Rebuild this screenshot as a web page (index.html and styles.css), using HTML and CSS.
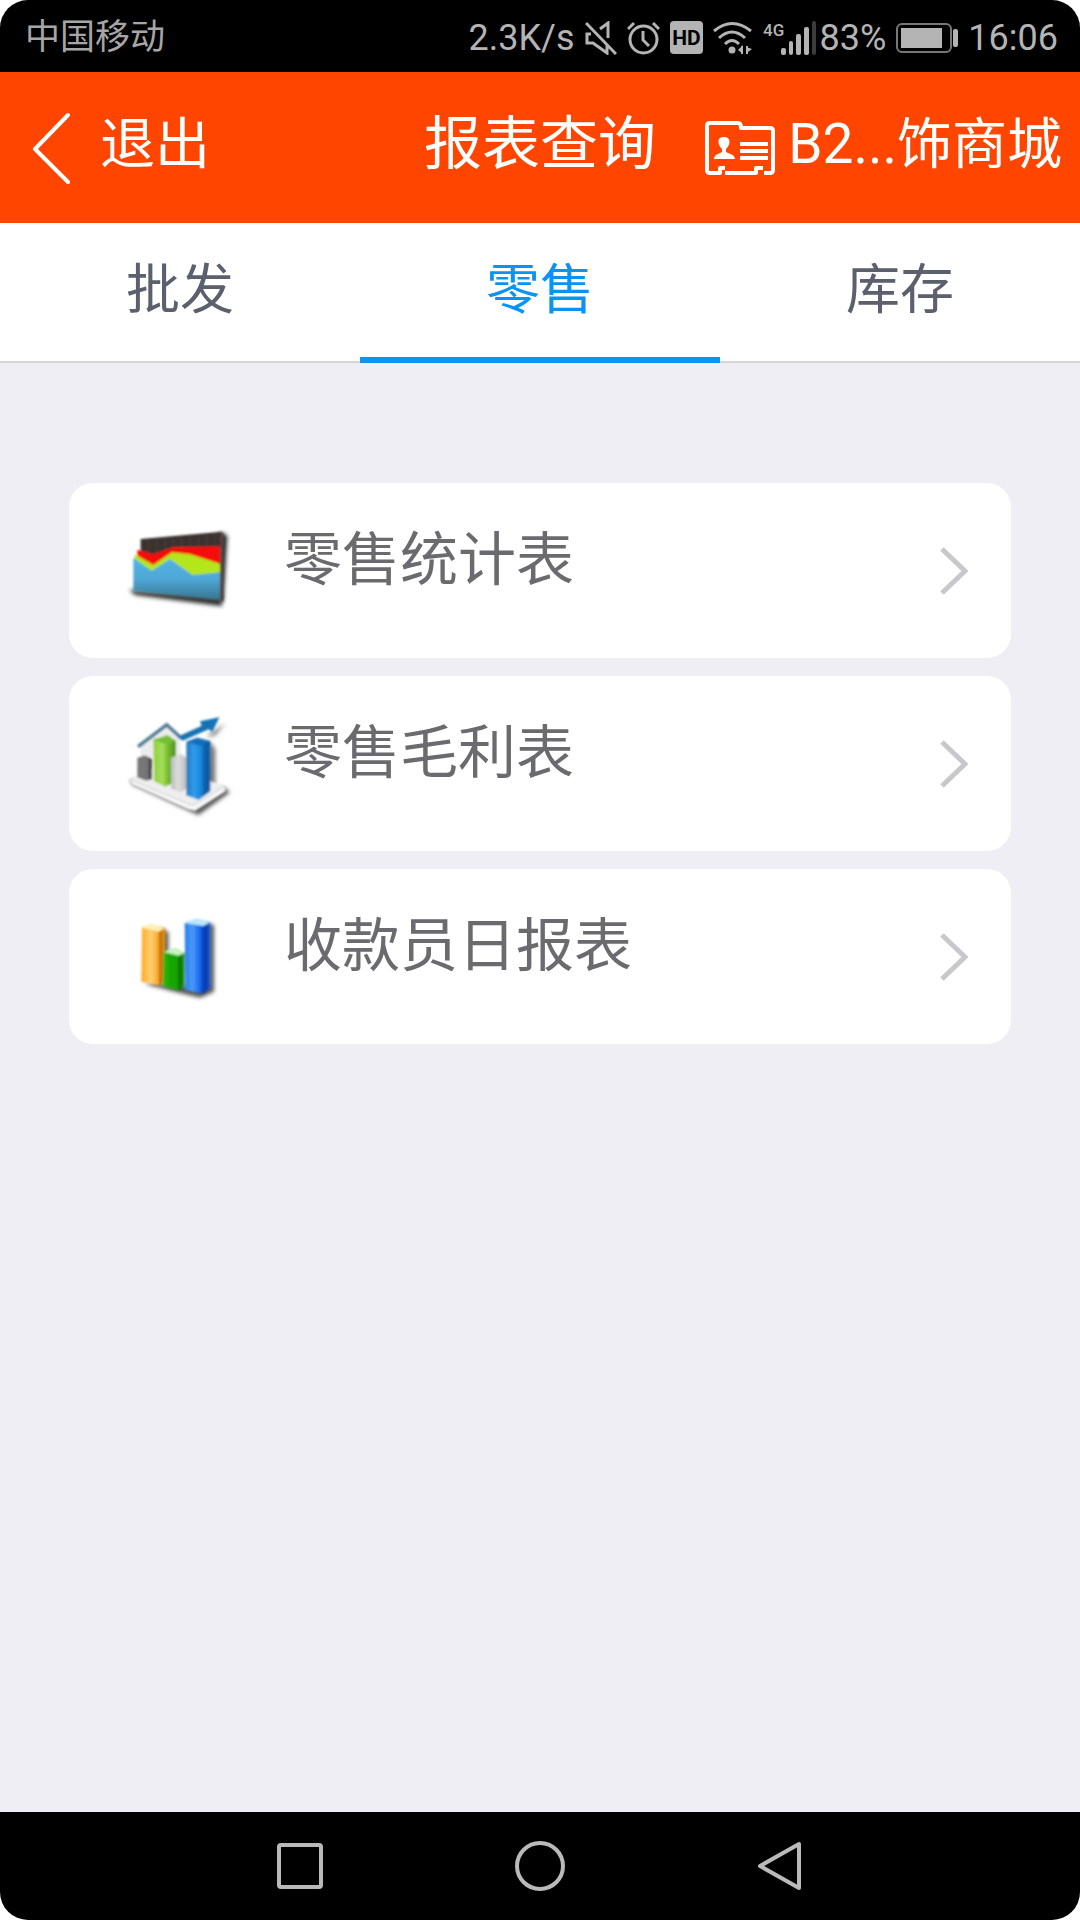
FILE: index.html
```html
<!DOCTYPE html>
<html lang="zh-CN">
<head>
<meta charset="utf-8">
<meta name="viewport" content="width=device-width, initial-scale=1">
<title>报表查询</title>
<link rel="stylesheet" href="styles.css">
</head>
<body>
<div class="screen">
  <div class="status">
    <span class="carrier">中国移动</span>
    <div class="status-info">
      <span>2.3K/s</span>
      <svg width="32" height="34" viewBox="0 0 32 34" fill="none" stroke="currentColor" stroke-width="3">
        <path d="M1 2 31 33M6 13H2v9h6l14 10v-8M15 8l8-6v15"/>
      </svg>
      <svg width="33" height="34" viewBox="0 0 33 34" fill="none" stroke="currentColor" stroke-width="3">
        <circle cx="16.500" cy="18.500" r="13.500"/><path d="M1 8 7 2M32 8l-6-6M16 10v9l6 6"/>
      </svg>
      <svg width="33" height="34" viewBox="0 0 33 34">
        <rect width="33" height="33" rx="4" fill="currentColor"/>
        <text class="hd-text" x="16.500" y="24" text-anchor="middle">HD</text>
      </svg>
      <svg width="40" height="34" viewBox="0 0 40 34" fill="none" stroke="currentColor" stroke-width="3">
        <path d="M1 10Q19-5 38 10M6 17Q19 5 32 17M12 23q7-7 14 0"/>
        <circle cx="19" cy="29" r="3.500" fill="currentColor" stroke="none"/>
        <path d="M30 24v9l-5-4zM33 24v9M33 26l6 2-4 3" fill="currentColor" stroke="none"/>
        <path d="M29 25v8M34 25v8" stroke-width="2"/>
      </svg>
      <div class="signal">
        <svg width="53" height="34" viewBox="0 0 53 34" fill="currentColor">
          <text class="net-text" x="0" y="15">4G</text>
          <rect x="18" y="27" width="5" height="7" rx="2"/><rect x="26" y="20" width="4" height="14" rx="2"/>
          <rect x="33" y="13" width="5" height="21" rx="2"/><rect x="41" y="6" width="5" height="28" rx="2"/>
          <rect x="49" y="0" width="4" height="34" rx="2" fill="#3c3c3c"/>
        </svg>
        <span>83%</span>
      </div>
      <svg width="62" height="30" viewBox="0 0 62 30">
        <rect x="1" y="1" width="54" height="28" rx="5" fill="none" stroke="#777" stroke-width="2"/>
        <rect x="5" y="5" width="41" height="20" fill="currentColor"/><rect x="57" y="6" width="5" height="18" rx="2" fill="currentColor"/>
      </svg>
      <span>16:06</span>
    </div>
  </div>

  <header class="header">
    <button class="back" type="button">
      <svg width="40" height="72" viewBox="0 0 40 72" fill="none" stroke="currentColor" stroke-width="4" stroke-linecap="round" stroke-linejoin="round"><path d="M36 3 3 37l33 33"/></svg>
      <span class="header-label">退出</span>
    </button>
    <h1 class="title">报表查询</h1>
    <button class="shop" type="button">
      <svg width="70" height="54" viewBox="0 0 70 54" fill="none" stroke="currentColor" stroke-width="4" stroke-linejoin="round">
        <path d="M20 47h-5v5H5q-3 0-3-3V5q0-3 3-3h28q3 0 3 5h29q3 0 3 3v39q0 3-3 3h-6M20 52h31v-5h7"/>
        <path d="M35 23h28M35 30h28M35 37h28"/>
        <path d="M19 16c8 0 6 9 2 12v3c4 2 9 3 9 7H9c0-4 4-5 8-7v-3c-4-4-6-12 2-12z" fill="currentColor" stroke="none"/>
      </svg>
      <span class="header-label">B2...饰商城</span>
    </button>
  </header>

  <nav class="tabs">
    <button class="tab" type="button">批发</button>
    <button class="tab tab-active" type="button">零售</button>
    <button class="tab" type="button">库存</button>
  </nav>

  <main class="reports">
    <a class="report" href="#sales">
      <svg class="report-icon" viewBox="0 6 420 420">
        <defs>
          <filter id="shade" x="-20%" y="-20%" width="140%" height="140%"><feGaussianBlur stdDeviation="7"/></filter>
          <filter id="soft"><feGaussianBlur stdDeviation="3"/></filter>
          <linearGradient id="sea" x2="0" y2="1"><stop stop-color="#4fb3e6"/><stop offset=".5" stop-color="#50a8d6"/><stop offset="1" stop-color="#37758f"/></linearGradient>
        </defs>
        <path d="M55 272 340 305 352 110 330 98 330 285z" fill="#222" filter="url(#shade)"/>
        <path d="M58 272 336 298V322L75 288z" fill="#333" filter="url(#shade)"/>
        <g filter="url(#soft)">
          <path d="M92 120 334 98V190L92 180z" fill="#3b302f"/>
          <path d="M115 122v50M140 120v50M165 118v50M190 116v40M215 114v40M240 112v40M265 109v40M290 107v40M315 104v40" stroke="#4d4140" stroke-width="3"/>
          <path d="M82 152 130 166 190 145 334 142V210H82z" fill="#f5110c"/>
          <path d="M74 166 130 198 186 160 240 166 334 196V240H74z" fill="#b5e61a"/>
          <path d="M70 176 125 215 180 180 248 228 330 220V303L70 275z" fill="url(#sea)"/>
          <path d="M330 98 340 102V308L330 304z" fill="#55413d"/>
        </g>
      </svg>
      <span class="report-name">零售统计表</span>
      <svg class="chevron" viewBox="0 0 28 48"><path d="M2 2 25 24 2 46"/></svg>
    </a>
    <a class="report" href="#profit">
      <svg class="report-icon" viewBox="0 10 420 420">
        <defs>
          <linearGradient id="lime"><stop stop-color="#8fd03d"/><stop offset=".4" stop-color="#a5df58"/><stop offset=".7" stop-color="#6db428"/><stop offset="1" stop-color="#4e941c"/></linearGradient>
          <linearGradient id="azure"><stop stop-color="#2477bd"/><stop offset=".3" stop-color="#2f9cec"/><stop offset=".65" stop-color="#1584d8"/><stop offset=".7" stop-color="#1268b2"/><stop offset="1" stop-color="#0b529a"/></linearGradient>
          <linearGradient id="steel"><stop stop-color="#777"/><stop offset=".65" stop-color="#777"/><stop offset="1" stop-color="#333"/></linearGradient>
          <linearGradient id="silver"><stop stop-color="#bbb"/><stop offset=".4" stop-color="#ddd"/><stop offset="1" stop-color="#b5b5b5"/></linearGradient>
        </defs>
        <path d="M65 280 265 373 360 305 340 290 250 345 65 265z" fill="#555" filter="url(#shade)"/>
        <path d="M298 150 316 175V280L290 305zM288 138l58-40-30 36z" fill="#777" filter="url(#shade)"/>
        <g filter="url(#soft)">
          <path d="M58 266 150 225 345 285 345 302 255 358 235 356 65 280z" fill="#eee"/>
          <path d="M58 266 240 342 255 342 345 286V302L255 360 235 356 66 281z" fill="#f8f8f8" stroke="#ccc" stroke-width="3"/>
          <path d="M92 170 170 112 211 148V200H92z" fill="#ececec"/>
          <path d="M84 168 170 103 211 140 285 107" fill="none" stroke="#527f99" stroke-width="11"/>
          <path d="M202 140 275 106 270 92 328 80 307 124 296 116 218 150z" fill="#1972b5"/>
          <path d="M82 202 104 194 126 204V266L108 270 82 260z" fill="url(#steel)"/>
          <path d="M130 146 172 134 198 151V272L165 288 132 272z" fill="url(#lime)"/>
          <path d="M130 148 172 134 198 151 168 160z" fill="#73bf35"/>
          <path d="M182 201 212 190 236 204V290L211 305 184 294z" fill="url(#silver)"/>
          <path d="M229 153 262 141 301 152V302L266 328 229 314z" fill="url(#azure)"/>
          <path d="M229 153 262 141 301 152 268 165z" fill="#126db9"/>
        </g>
      </svg>
      <span class="report-name">零售毛利表</span>
      <svg class="chevron" viewBox="0 0 28 48"><path d="M2 2 25 24 2 46"/></svg>
    </a>
    <a class="report" href="#cashier">
      <svg class="report-icon" viewBox="0 -10 420 420">
        <defs>
          <linearGradient id="amber"><stop stop-color="#ffa928"/><stop offset=".4" stop-color="#ffd074"/><stop offset=".7" stop-color="#fba72a"/><stop offset=".78" stop-color="#bc6c00"/><stop offset="1" stop-color="#ea9b24"/></linearGradient>
          <linearGradient id="leaf"><stop stop-color="#3db71c"/><stop offset=".3" stop-color="#18a800"/><stop offset=".65" stop-color="#16a400"/><stop offset=".78" stop-color="#087000"/><stop offset="1" stop-color="#279b19"/></linearGradient>
          <linearGradient id="royal"><stop stop-color="#297de8"/><stop offset=".3" stop-color="#4a9afb"/><stop offset=".6" stop-color="#1766ed"/><stop offset=".78" stop-color="#0636aa"/><stop offset="1" stop-color="#1656d0"/></linearGradient>
        </defs>
        <path d="M105 280 155 294 210 308 270 322 312 304V105L295 98V290L150 280 175 180V125L150 115V270z" fill="#555" filter="url(#shade)"/>
        <g filter="url(#soft)">
          <path d="M96 112 120 102 166 112V268L148 286 94 274z" fill="url(#amber)"/>
          <path d="M96 112 120 102 166 112 146 124z" fill="#fff0b0"/>
          <path d="M161 185 195 174 224 187V288L208 300 158 288z" fill="url(#leaf)"/>
          <path d="M161 185 195 174 224 187 206 196z" fill="#c4f6bd"/>
          <path d="M224 98 258 86 301 96V292L280 310 226 300z" fill="url(#royal)"/>
          <path d="M224 98 258 86 301 96 280 107z" fill="#b9e8ff"/>
        </g>
      </svg>
      <span class="report-name">收款员日报表</span>
      <svg class="chevron" viewBox="0 0 28 48"><path d="M2 2 25 24 2 46"/></svg>
    </a>
  </main>

  <footer class="softkeys">
    <button class="softkey" type="button" aria-label="最近任务"><svg viewBox="0 0 50 50"><rect x="4" y="4" width="42" height="42" rx="2"/></svg></button>
    <button class="softkey" type="button" aria-label="主屏幕"><svg viewBox="0 0 50 50"><circle cx="25" cy="25" r="23"/></svg></button>
    <button class="softkey" type="button" aria-label="返回"><svg viewBox="0 0 50 50"><path d="M44 3V47L5 25z"/></svg></button>
  </footer>
</div>
</body>
</html>
```
FILE: styles.css
```css
* {
  box-sizing: border-box;
}

body {
  margin: 0;
  background: #fff;
  font-family: Roboto, "Noto Sans CJK SC", sans-serif;
}

button {
  padding: 0;
  border: 0;
  background: none;
  color: inherit;
  font: inherit;
}

svg {
  display: block;
  flex: none;
}

.screen {
  display: flex;
  flex-direction: column;
  min-height: 100vh;
  overflow: hidden;
  border-radius: 28px;
  background: #efeef4;
}

.status {
  display: flex;
  align-items: center;
  justify-content: space-between;
  height: 72px;
  padding: 3px 22px 0 25px;
  background: #000;
  color: #b4b4b4;
  font-size: 36px;
  line-height: 68px;
}

.carrier {
  color: #a6a6a6;
  font-size: 35px;
}

.status-info {
  display: flex;
  align-items: center;
  gap: 10px;
}

.signal {
  display: flex;
  align-items: center;
  gap: 4px;
}

.hd-text {
  fill: #000;
  font-size: 21px;
  font-weight: 700;
}

.net-text {
  font-size: 17px;
  font-weight: 500;
}

.header {
  display: grid;
  grid-template-columns: 1fr auto 1fr;
  align-items: center;
  height: 151px;
  background: #ff4500;
  color: #fff;
}

.back,
.shop {
  display: flex;
  align-items: center;
  font-size: 55px;
  white-space: nowrap;
}

.back {
  justify-self: start;
  gap: 28px;
  padding-left: 32px;
}

.shop {
  justify-self: end;
  gap: 13px;
  padding-right: 18px;
}

.header-label,
.title {
  padding-bottom: 17px;
}

.title {
  margin: 0;
  font-size: 58px;
  font-weight: 400;
}

.tabs {
  display: grid;
  grid-template-columns: repeat(3, 1fr);
  height: 140px;
  background: #fff;
  box-shadow: inset 0 -2px #d5d5d8;
  color: #5b606c;
  font-size: 54px;
}

.tab {
  padding-bottom: 10px;
  border-bottom: 6px solid transparent;
}

.tab-active {
  border-color: #0894f0;
  color: #0894f0;
}

.reports {
  display: flex;
  flex: 1;
  flex-direction: column;
  gap: 18px;
  padding: 120px 69px;
}

.report {
  display: flex;
  align-items: center;
  gap: 34px;
  height: 175px;
  padding: 0 43px 0 41px;
  border-radius: 24px;
  background: #fff;
  color: #6b6b6f;
  font-size: 58px;
  text-decoration: none;
}

.report-icon {
  width: 140px;
  height: 140px;
}

.report-name {
  flex: 1;
  padding-bottom: 32px;
}

.chevron {
  width: 28px;
  height: 48px;
  fill: none;
  stroke: #c7c7cc;
  stroke-width: 5;
}

.softkeys {
  display: flex;
  align-items: center;
  justify-content: center;
  gap: 190px;
  height: 108px;
  background: #000;
}

.softkey {
  width: 50px;
  height: 50px;
}

.softkey svg {
  fill: none;
  stroke: #bababa;
  stroke-width: 4;
  stroke-linejoin: round;
}
```
